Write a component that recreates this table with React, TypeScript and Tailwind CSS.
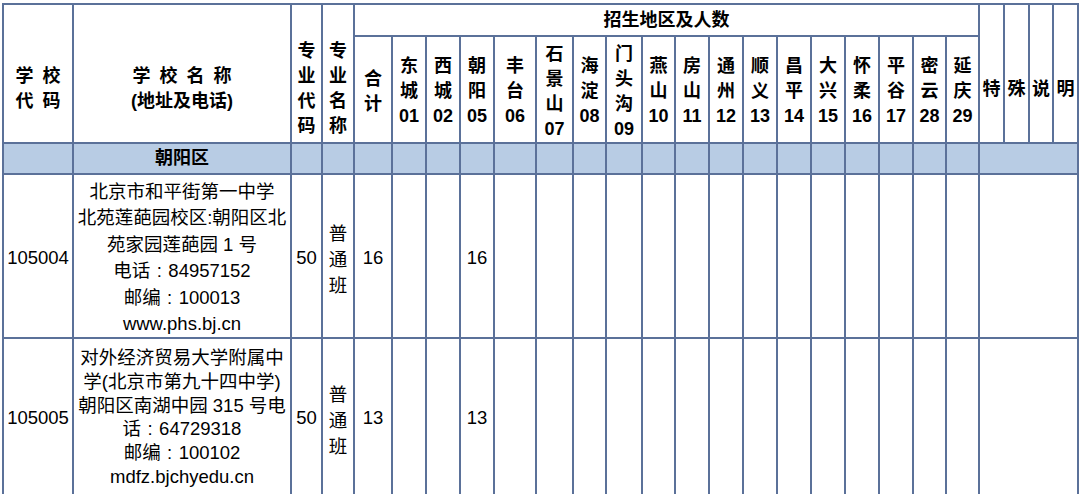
import React from "react";

const regions: string[][] = [
  ["合", "计"],
  ["东", "城", "01"],
  ["西", "城", "02"],
  ["朝", "阳", "05"],
  ["丰", "台", "06"],
  ["石", "景", "山", "07"],
  ["海", "淀", "08"],
  ["门", "头", "沟", "09"],
  ["燕", "山", "10"],
  ["房", "山", "11"],
  ["通", "州", "12"],
  ["顺", "义", "13"],
  ["昌", "平", "14"],
  ["大", "兴", "15"],
  ["怀", "柔", "16"],
  ["平", "谷", "17"],
  ["密", "云", "28"],
  ["延", "庆", "29"],
];

const cell = "border-2 border-[#5b7199] p-0 text-center align-middle";
const tall = "border-2 border-[#5b7199] p-0 pt-[31px] text-center align-middle";

function Stack({ lines, lh = "leading-[25px]" }: { lines: React.ReactNode[]; lh?: string }) {
  return (
    <div className={`flex flex-col items-center ${lh}`}>
      {lines.map((l, i) => (
        <div key={i} className="whitespace-pre">
          {l}
        </div>
      ))}
    </div>
  );
}

const Colon = () => <span className="inline-block w-[18px] text-center leading-none">:</span>;

type Row = {
  code: string;
  lines: React.ReactNode[];
  major: string;
  total: string;
  lh: string;
  h: string;
  pad: string;
};

const rows: Row[] = [
  {
    code: "105004",
    lines: [
      "北京市和平街第一中学",
      "北苑莲葩园校区:朝阳区北",
      "苑家园莲葩园 1 号",
      <>
        电话<Colon />84957152
      </>,
      <>
        邮编<Colon />100013
      </>,
      "www.phs.bj.cn",
    ],
    major: "50",
    total: "16",
    lh: "leading-[26.4px]",
    h: "h-[162px]",
    pad: "pt-[4px]",
  },
  {
    code: "105005",
    lines: [
      "对外经济贸易大学附属中",
      "学(北京市第九十四中学)",
      "朝阳区南湖中园 315 号电",
      <>
        话<Colon />64729318
      </>,
      <>
        邮编<Colon />100102
      </>,
      "mdfz.bjchyedu.cn",
    ],
    major: "50",
    total: "13",
    lh: "leading-[23.8px]",
    h: "h-[158px]",
    pad: "pt-[0px]",
  },
];

export default function App() {
  return (
    <div className="w-[1080px] h-[494px] overflow-hidden bg-white font-['Liberation_Sans','Noto_Sans_CJK_SC',sans-serif] text-black">
      <table className="ml-[2px] mt-[3px] w-[1076px] table-fixed border-collapse">
        <colgroup>
          <col className="w-[70px]" />
          <col className="w-[218px]" />
          <col className="w-[31px]" />
          <col className="w-[32px]" />
          <col className="w-[38px]" />
          <col className="w-[34px]" />
          <col className="w-[34px]" />
          <col className="w-[34px]" />
          <col className="w-[42px]" />
          <col className="w-[37px]" />
          <col className="w-[33px]" />
          <col className="w-[36px]" />
          <col className="w-[33px]" />
          <col className="w-[34px]" />
          <col className="w-[34px]" />
          <col className="w-[34px]" />
          <col className="w-[34px]" />
          <col className="w-[34px]" />
          <col className="w-[34px]" />
          <col className="w-[34px]" />
          <col className="w-[33px]" />
          <col className="w-[33px]" />
          <col className="w-[25px]" />
          <col className="w-[25px]" />
          <col className="w-[24px]" />
          <col className="w-[25px]" />
        </colgroup>
        <tbody className="text-[18px] font-bold">
          <tr className="h-[32px]">
            <td rowSpan={2} className={tall}>
              <Stack lines={["学\u2002校", "代\u2002码"]} />
            </td>
            <td rowSpan={2} className={tall}>
              <Stack lines={["学\u2002校\u2002名\u2002称", "(地址及电话)"]} />
            </td>
            <td rowSpan={2} className={tall}>
              <Stack lines={["专", "业", "代", "码"]} />
            </td>
            <td rowSpan={2} className={tall}>
              <Stack lines={["专", "业", "名", "称"]} />
            </td>
            <td colSpan={18} className={cell}>
              招生地区及人数
            </td>
            <td rowSpan={2} className={tall}>特</td>
            <td rowSpan={2} className={tall}>殊</td>
            <td rowSpan={2} className={tall}>说</td>
            <td rowSpan={2} className={tall}>明</td>
          </tr>
          <tr className="h-[107px]">
            {regions.map((r, i) => (
              <td key={i} className={`${cell} pt-[4px]`}>
                <Stack lines={r} />
              </td>
            ))}
          </tr>
          <tr className="h-[31px] bg-[#b8cce4]">
            <td className={cell}></td>
            <td className={cell}>朝阳区</td>
            <td className={cell}></td>
            <td className={cell}></td>
            {regions.map((_, i) => (
              <td key={i} className={cell}></td>
            ))}
            <td colSpan={4} className={cell}></td>
          </tr>
        </tbody>
        <tbody className="text-[18.5px] font-normal">
          {rows.map((row) => (
            <tr key={row.code} className={row.h}>
              <td className={`${cell} ${row.pad}`}>{row.code}</td>
              <td className={`${cell} ${row.pad}`}>
                <Stack lines={row.lines} lh={row.lh} />
              </td>
              <td className={`${cell} ${row.pad}`}>{row.major}</td>
              <td className={`${cell} pt-[8px]`}>
                <Stack lines={["普", "通", "班"]} lh="leading-[26px]" />
              </td>
              {regions.map((_, i) => (
                <td key={i} className={`${cell} ${row.pad}`}>
                  {i === 0 || i === 3 ? row.total : ""}
                </td>
              ))}
              <td colSpan={4} className={cell}></td>
            </tr>
          ))}
        </tbody>
      </table>
    </div>
  );
}
